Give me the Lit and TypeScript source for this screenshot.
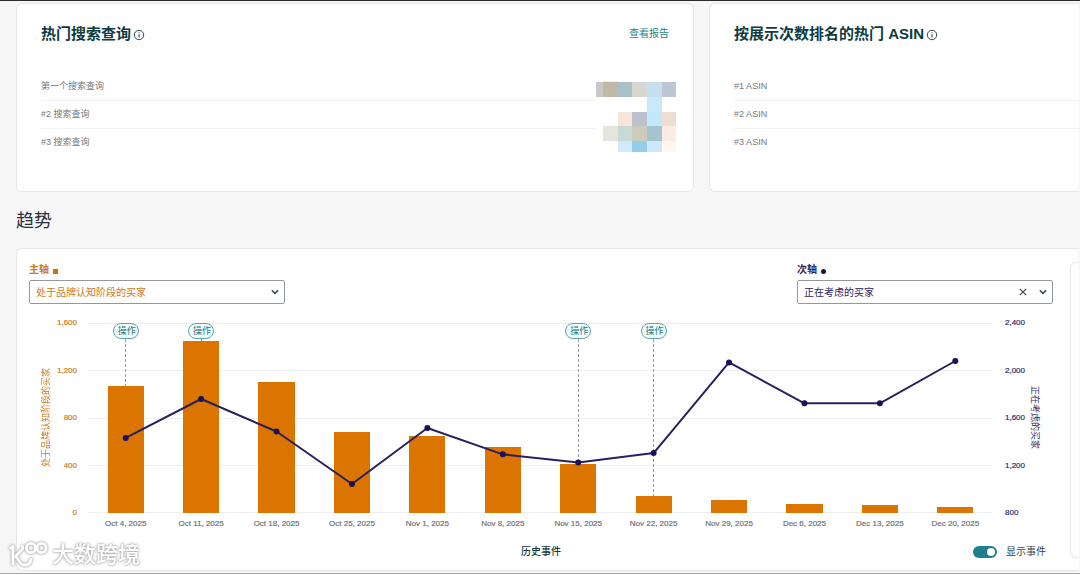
import { LitElement, html, svg, css, nothing } from "lit";
import { customElement, property, state } from "lit/decorators.js";

interface Week {
  label: string;
  aware: number;
  considering: number;
  event?: boolean;
}

const WEEKS: Week[] = [
  { label: "Oct 4, 2025", aware: 1070, considering: 1432, event: true },
  { label: "Oct 11, 2025", aware: 1448, considering: 1760, event: true },
  { label: "Oct 18, 2025", aware: 1102, considering: 1486 },
  { label: "Oct 25, 2025", aware: 680, considering: 1044 },
  { label: "Nov 1, 2025", aware: 648, considering: 1516 },
  { label: "Nov 8, 2025", aware: 554, considering: 1294 },
  { label: "Nov 15, 2025", aware: 412, considering: 1225, event: true },
  { label: "Nov 22, 2025", aware: 141, considering: 1305, event: true },
  { label: "Nov 29, 2025", aware: 109, considering: 2068 },
  { label: "Dec 6, 2025", aware: 72, considering: 1724 },
  { label: "Dec 13, 2025", aware: 65, considering: 1724 },
  { label: "Dec 20, 2025", aware: 49, considering: 2080 },
];

const MOSAIC: [number, number, number, number, string][] = [
  [0, 1, 7, 15, "#cac8c6"], [7, 1, 15, 15, "#bfb9a5"], [22, 1, 14, 15, "#a9c0c9"],
  [36, 1, 15, 15, "#d8d6d3"], [51, 1, 15, 15, "#c6dfee"], [66, 1, 14, 15, "#bcc7d5"],
  [7, 0, 15, 1, "#eeecdd"], [51, 16, 15, 15, "#c9e8f9"],
  [22, 31, 14, 14, "#f6e5da"], [36, 31, 15, 14, "#bbc2cd"], [51, 31, 15, 14, "#c5e7fa"],
  [66, 31, 14, 14, "#eadfd2"],
  [7, 45, 15, 15, "#e5e5df"], [22, 45, 14, 15, "#c8dad5"], [36, 45, 15, 15, "#ccccbd"],
  [51, 45, 15, 15, "#a5c4ce"], [66, 45, 14, 15, "#fdebdf"],
  [22, 60, 14, 11, "#d2ebfa"], [36, 60, 15, 11, "#95cdec"], [51, 60, 15, 11, "#cbe7f8"],
  [66, 60, 14, 11, "#fef7ee"],
];

const infoIcon = html`<svg class="info" viewBox="0 0 12 12" aria-hidden="true">
  <circle cx="6" cy="6" r="4.7" fill="none" stroke="currentColor" stroke-width="1"></circle>
  <path d="M6 5.2V8.6M6 3.2V4.3" stroke="currentColor" stroke-width="1.1"></path>
</svg>`;

const chevron = html`<svg class="chevron" viewBox="0 0 10 10" aria-hidden="true">
  <path d="M1.8 3.2 5 6.4 8.2 3.2" fill="none" stroke="#3d4448" stroke-width="1.5"></path>
</svg>`;

@customElement("rank-card")
class RankCard extends LitElement {
  @property() heading = "";
  @property({ attribute: false }) rows: string[] = [];
  @property({ type: Boolean }) report = false;

  static styles = css`
    :host {
      display: block;
      position: relative;
      box-sizing: border-box;
      background: #fff;
      border: 1px solid #e4e6e7;
      border-radius: 6px;
      padding: 20px 24px 35px;
    }
    :host([open-end]) {
      border-right: 0;
      border-radius: 6px 0 0 6px;
      padding-right: 0;
    }
    .head {
      display: flex;
      align-items: center;
      justify-content: space-between;
      height: 20px;
      margin-bottom: 28px;
    }
    h2 {
      margin: 0;
      display: flex;
      align-items: center;
      gap: 2px;
      font-size: 15px;
      line-height: 20px;
      font-weight: 700;
      color: #0d3b42;
      white-space: nowrap;
    }
    .info {
      width: 12px;
      height: 12px;
      margin-top: 2px;
      color: #34484c;
    }
    a {
      font-size: 10px;
      line-height: 20px;
      color: #2a8088;
      text-decoration: none;
    }
    ol {
      list-style: none;
      margin: 0;
      padding: 0;
    }
    li {
      font-size: 9px;
      line-height: 28px;
      color: #74797b;
      box-shadow: 0 1px #f1f2f2;
    }
    li:last-child {
      box-shadow: none;
    }
    .mosaic {
      position: absolute;
      right: 17px;
      top: 77px;
      width: 80px;
      height: 72px;
      background: #fff;
    }
  `;

  render() {
    return html`
      <div class="head">
        <h2>${this.heading}${infoIcon}</h2>
        ${this.report ? html`<a href="#report">查看报告</a>` : nothing}
      </div>
      <ol>
        ${this.rows.map((r) => html`<li>${r}</li>`)}
      </ol>
      ${this.report
        ? html`<svg class="mosaic" viewBox="0 0 80 72" shape-rendering="crispEdges" aria-hidden="true">
            ${MOSAIC.map(([x, y, w, h, c]) => svg`<rect x=${x} y=${y} width=${w} height=${h} fill=${c}></rect>`)}
          </svg>`
        : nothing}
    `;
  }
}

@customElement("trend-chart")
class TrendChart extends LitElement {
  @property({ type: Boolean }) events = true;

  static styles = css`
    :host {
      display: grid;
      grid-template-columns: 23px 25px 1fr 24px 12px;
      padding: 19px 12px 0 0;
      font-size: 8px;
    }
    .name {
      justify-self: end;
      align-self: center;
      writing-mode: vertical-rl;
      text-orientation: sideways;
      font-size: 9px;
      line-height: 12px;
      white-space: nowrap;
    }
    .primary {
      color: #cf7a24;
    }
    .secondary {
      color: #302b6b;
    }
    .name.primary {
      transform: rotate(180deg);
    }
    .ticks {
      list-style: none;
      margin: 0;
      padding: 0;
      display: flex;
      flex-direction: column;
      justify-content: space-between;
      -webkit-text-stroke: 0.2px;
    }
    .ticks li {
      height: 0;
      line-height: 0;
    }
    .ticks.primary {
      text-align: right;
    }
    .plot {
      position: relative;
      height: 190px;
      margin: 0 12px 0 11px;
    }
    .lines,
    .weeks,
    .curve {
      position: absolute;
      inset: 0;
    }
    .lines {
      display: flex;
      flex-direction: column;
      justify-content: space-between;
    }
    .lines i {
      height: 1px;
      background: #efefef;
    }
    .weeks,
    .dates {
      display: grid;
      grid-template-columns: repeat(12, 1fr);
    }
    .week {
      display: flex;
      flex-direction: column;
      align-items: center;
      height: 190px;
    }
    .space {
      flex: 1;
      display: flex;
      flex-direction: column;
      align-items: center;
      min-height: 0;
    }
    .bar {
      width: 48%;
      background: #dc7500;
    }
    .dash {
      flex: 1;
      width: 1px;
      background: repeating-linear-gradient(#9a9a9a 0 3px, transparent 3px 5px);
    }
    .pill {
      box-sizing: border-box;
      width: 26px;
      height: 16px;
      padding: 0 0 0 2px;
      border: 1px solid #5fa3a9;
      border-radius: 8px;
      background: #f0fbfb;
      color: #2b7880;
      font: inherit;
      font-size: 9px;
      line-height: 14px;
      white-space: nowrap;
      display: flex;
      justify-content: center;
    }
    .curve {
      width: 100%;
      height: 100%;
      overflow: visible;
      pointer-events: none;
    }
    .curve path {
      fill: none;
      stroke: #2a205f;
      stroke-width: 2px;
      stroke-linejoin: round;
      vector-effect: non-scaling-stroke;
    }
    .curve .dots {
      stroke: #1c0f5c;
      stroke-width: 6px;
      stroke-linecap: round;
    }
    .dates {
      grid-column: 3;
      margin: 5px 12px 0 11px;
      line-height: 12px;
      color: #6f7476;
      text-align: center;
      white-space: nowrap;
      -webkit-text-stroke: 0.2px;
    }
  `;

  render() {
    const pts = WEEKS.map((w, i) => `${i * 100 + 50} ${(2400 - w.considering) / 16}`);
    return html`
      <div class="name primary">处于品牌认知阶段的买家</div>
      <ul class="ticks primary">
        ${["1,600", "1,200", "800", "400", "0"].map((t) => html`<li>${t}</li>`)}
      </ul>
      <div class="plot">
        <div class="lines"><i></i><i></i><i></i><i></i><i></i></div>
        <div class="weeks">
          ${WEEKS.map(
            (w) => html`<div class="week">
              <div class="space">
                ${w.event && this.events
                  ? html`<button class="pill" type="button">操作</button><span class="dash"></span>`
                  : nothing}
              </div>
              <div class="bar" style="height:${w.aware / 16}%"></div>
            </div>`
          )}
        </div>
        <svg class="curve" viewBox="0 0 1200 100" preserveAspectRatio="none" aria-hidden="true">
          <path d=${"M" + pts.join("L")}></path>
          <path class="dots" d=${pts.map((p) => `M${p}h0.01`).join("")}></path>
        </svg>
      </div>
      <ul class="ticks secondary">
        ${["2,400", "2,000", "1,600", "1,200", "800"].map((t) => html`<li>${t}</li>`)}
      </ul>
      <div class="name secondary">正在考虑的买家</div>
      <div class="dates">${WEEKS.map((w) => html`<span>${w.label}</span>`)}</div>
    `;
  }
}

@customElement("app-root")
class AppRoot extends LitElement {
  @state() private showEvents = true;

  static styles = css`
    :host {
      display: block;
      position: relative;
      box-sizing: border-box;
      min-height: 100vh;
      padding: 2px 1px 2px 16px;
      border-top: 1px solid #2f2a30;
      border-bottom: 1px solid #a9a9a9;
      background: #f6f6f6;
      overflow: hidden;
      font-family: "Liberation Sans", "Noto Sans CJK SC", sans-serif;
    }
    .cards {
      display: grid;
      grid-template-columns: 11fr 6fr;
      gap: 15px;
    }
    h1 {
      margin: 16px 0 14px;
      font-size: 18px;
      line-height: 26px;
      font-weight: 400;
      color: #2c3140;
    }
    .panel {
      display: flex;
      gap: 17px;
      background: #fff;
      border: 1px solid #e4e6e7;
      border-right: 0;
      border-radius: 6px 0 0 6px;
      padding: 13px 0 12px 12px;
    }
    .main {
      flex: 1;
      min-width: 0;
    }
    .next {
      width: 8px;
      border: 1px solid #e6e8e9;
      border-right: 0;
      border-radius: 6px 0 0 6px;
    }
    .pickers {
      display: flex;
      justify-content: space-between;
    }
    .picker {
      width: 256px;
    }
    label {
      font-size: 10px;
    }
    .picker label {
      display: flex;
      align-items: center;
      gap: 4px;
      font-weight: 700;
      line-height: 16px;
      margin-bottom: 2px;
    }
    .primary {
      color: #cf7a24;
    }
    .secondary {
      color: #2c2560;
    }
    .square,
    .dot {
      width: 5px;
      height: 5px;
      margin-top: 2px;
      background: #d1700a;
    }
    .dot {
      background: #1c1452;
      border-radius: 50%;
    }
    .field {
      position: relative;
      height: 24px;
    }
    select {
      appearance: none;
      box-sizing: border-box;
      width: 100%;
      height: 24px;
      margin: 0;
      padding: 0 40px 0 6px;
      border: 1px solid #93999b;
      border-radius: 2px;
      background: #fff;
      color: inherit;
      font: inherit;
      font-size: 10px;
      display: block;
    }
    .chevron {
      position: absolute;
      right: 5px;
      top: 7px;
      width: 10px;
      height: 10px;
      pointer-events: none;
    }
    .clear {
      position: absolute;
      right: 25px;
      top: 7px;
      width: 10px;
      height: 10px;
      padding: 0;
      border: 0;
      background: none;
      display: flex;
    }
    .foot {
      display: grid;
      grid-template-columns: 1fr auto 1fr;
      align-items: center;
      margin-top: 16px;
      font-size: 10px;
      line-height: 12px;
      color: #2f4448;
    }
    .foot strong {
      grid-column: 2;
      font-weight: 500;
      color: #163a3e;
    }
    .switch {
      justify-self: end;
      display: flex;
      align-items: center;
      gap: 9px;
      height: 12px;
      padding-right: 7px;
    }
    .switch input {
      appearance: none;
      width: 24px;
      height: 12px;
      margin: 0;
      padding: 2px;
      box-sizing: border-box;
      border-radius: 6px;
      background: #93999b;
      display: flex;
    }
    .switch input:checked {
      background: #1f7f8e;
      justify-content: flex-end;
    }
    .switch input::before {
      content: "";
      width: 8px;
      height: 8px;
      border-radius: 50%;
      background: #fff;
    }
    .mark {
      position: absolute;
      left: 8px;
      bottom: 4px;
      display: flex;
      align-items: center;
      gap: 4px;
      color: #fff;
      font-size: 22px;
      line-height: 28px;
      font-weight: 500;
      pointer-events: none;
      filter: drop-shadow(0 0 1px #aaa) drop-shadow(0 0 1px #c4c4c4);
    }
    .mark svg {
      width: 40px;
      height: 28px;
    }
  `;

  private toggle(e: Event) {
    this.showEvents = (e.target as HTMLInputElement).checked;
  }

  render() {
    return html`
      <div class="cards">
        <rank-card
          heading="热门搜索查询"
          report
          .rows=${["第一个搜索查询", "#2 搜索查询", "#3 搜索查询"]}
        ></rank-card>
        <rank-card
          open-end
          heading="按展示次数排名的热门 ASIN"
          .rows=${["#1 ASIN", "#2 ASIN", "#3 ASIN"]}
        ></rank-card>
      </div>
      <h1>趋势</h1>
      <section class="panel">
        <div class="main">
          <div class="pickers">
            <div class="picker primary">
              <label for="first">主轴<span class="square"></span></label>
              <div class="field">
                <select id="first"><option>处于品牌认知阶段的买家</option></select>
                ${chevron}
              </div>
            </div>
            <div class="picker secondary">
              <label for="second">次轴<span class="dot"></span></label>
              <div class="field">
                <select id="second"><option>正在考虑的买家</option></select>
                <button class="clear" type="button" aria-label="清除">
                  <svg viewBox="0 0 10 10" width="10" height="10">
                    <path d="M1.8 1.8 8.2 8.2M8.2 1.8 1.8 8.2" stroke="#3d4448" stroke-width="1.2"></path>
                  </svg>
                </button>
                ${chevron}
              </div>
            </div>
          </div>
          <trend-chart .events=${this.showEvents}></trend-chart>
          <div class="foot">
            <strong>历史事件</strong>
            <label class="switch">
              <input type="checkbox" role="switch" .checked=${this.showEvents} @change=${this.toggle} />显示事件
            </label>
          </div>
        </div>
        <div class="next"></div>
      </section>
      <div class="mark">
        <svg viewBox="0 0 40 28" fill="none" stroke="#fff" stroke-width="2.8" stroke-linecap="round" stroke-linejoin="round" aria-hidden="true">
          <path d="M2.500 7 5 5.500V23"></path>
          <path d="M14.500 5.500V8L7.500 15.500C10.500 16 11 24 16.500 24C20.500 24 22.500 21.500 23 18.500"></path>
          <circle cx="23" cy="7" r="4.600"></circle>
          <circle cx="33.500" cy="7" r="4.600"></circle>
          <path d="M26.500 10 30 4" stroke-width="2"></path>
        </svg>
        <span>大数跨境</span>
      </div>
    `;
  }
}
